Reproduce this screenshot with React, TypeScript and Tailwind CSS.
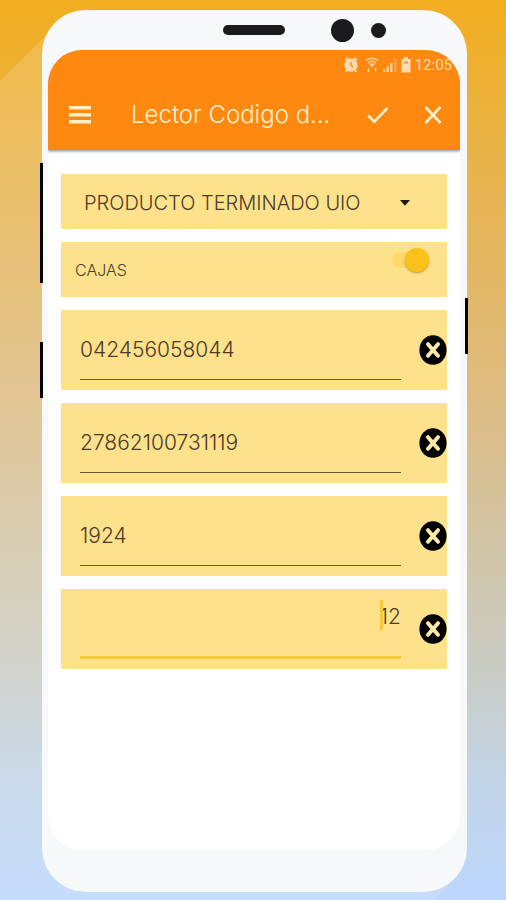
import { useState } from "react";

const INITIAL_FIELDS = [
  { id: "codigo", label: "Código", value: "042456058044" },
  { id: "barras", label: "Código de barras", value: "27862100731119" },
  { id: "lote", label: "Lote", value: "1924" },
  { id: "cantidad", label: "Cantidad", value: "12", active: true },
];

export default function App() {
  const [fields, setFields] = useState(INITIAL_FIELDS);
  const [cajas, setCajas] = useState(true);

  const update = (id: string, value: string) =>
    setFields(fields.map((f) => (f.id === id ? { ...f, value } : f)));

  return (
    <div className="relative flex min-h-screen flex-col bg-[linear-gradient(to_bottom,#f2ae20_0%,#e8b34a_18%,#dcbc85_46%,#d4c29c_56%,#c8cdc8_76%,#c2d4e8_87%,#bcd6fc_100%)] pt-[10px] pr-[39px] pb-2 pl-[42px] font-['Inter','Liberation_Sans',sans-serif]">
      {/* Diagonal light */}
      <div className="absolute inset-0 bg-white/15 [clip-path:polygon(0_9%,9%_4%,92%_96%,86%_100%,0_100%)]" />

      {/* Phone body */}
      <div className="relative flex flex-1 flex-col rounded-[44px] bg-[#f6f8fa] pr-[7px] pb-[42px] pl-[6px]">
        <div className="absolute top-[153px] left-[-2px] h-[120px] w-[3px] bg-black" />
        <div className="absolute top-[332px] left-[-2px] h-14 w-[3px] bg-black" />
        <div className="absolute top-[288px] right-[-1px] h-14 w-[3px] bg-black" />

        <div className="grid h-10 grid-cols-[1fr_auto_1fr] items-center">
          <span />
          <span className="h-[10px] w-[62px] rounded-full bg-[#1b1b1d]" />
          <span className="flex items-center gap-[17px] pl-[46px]">
            <span className="size-[23px] rounded-full bg-[#1b1b1d]" />
            <span className="size-[15px] rounded-full bg-[#1b1b1d]" />
          </span>
        </div>

        <div className="flex flex-1 flex-col overflow-hidden rounded-[34px] bg-white">
          <header className="h-[100px] bg-[#fe8810] text-[#fff0cc] shadow-[0_1px_3px_rgba(0,0,0,0.5)]">
            <StatusBar />
            <div className="flex h-[70px] items-center pr-[18px] pl-[21px]">
              <button type="button" aria-label="Menú" className="mr-10">
                <svg viewBox="0 0 22 18" className="h-[18px] w-[22px]" fill="currentColor">
                  <path d="M0 0h22v3.4H0zM0 7h22v3.4H0zM0 14h22v3.4H0z" />
                </svg>
              </button>
              <h1 className="flex-1 truncate text-2xl font-light">Lector Codigo d...</h1>
              <button type="button" aria-label="Aceptar">
                <svg viewBox="0 0 22 18" className="h-[18px] w-[22px]" fill="none" stroke="currentColor" strokeWidth="2.6">
                  <path d="M1.2 9.5 7.3 15.6 20.5 2" />
                </svg>
              </button>
              <button type="button" aria-label="Cerrar" className="ml-[35px]">
                <svg viewBox="0 0 18 18" className="size-[18px]" fill="none" stroke="currentColor" strokeWidth="2.6">
                  <path d="M1.5 1 16.5 17M16.5 1 1.5 17" />
                </svg>
              </button>
            </div>
          </header>

          <main className="flex flex-col gap-[13px] px-[13px] pt-6 pb-12 text-[#4c3a2c]">
            <div className="relative h-[55px] bg-[#fde18b]">
              <select
                aria-label="Bodega"
                className="size-full appearance-none bg-transparent pt-[2px] pr-16 pl-[23px] text-xl font-light"
              >
                <option>PRODUCTO TERMINADO UIO</option>
              </select>
              <svg viewBox="0 0 12 7" className="pointer-events-none absolute top-[26px] right-9 h-[7px] w-3" fill="#1d1712">
                <path d="M1 0h10L6 5.800z" />
              </svg>
            </div>

            <div className="flex h-[55px] justify-between bg-[#fde18b] pr-[18px] pl-[14px]">
              <label htmlFor="cajas" className="self-center text-base font-light">
                CAJAS
              </label>
              <input
                id="cajas"
                type="checkbox"
                role="switch"
                checked={cajas}
                onChange={(e) => setCajas(e.target.checked)}
                className="relative mt-[6px] h-6 w-[37px] appearance-none before:absolute before:top-1 before:left-0 before:h-4 before:w-8 before:rounded-full before:bg-[#fdd969] after:absolute after:top-0 after:left-0 after:size-6 after:rounded-full after:bg-[#fac218] after:shadow-[0_1px_2px_rgba(120,80,0,0.5)] checked:after:left-[13px]"
              />
            </div>

            {fields.map((f) => (
              <div key={f.id} className="flex h-20 items-center bg-[#fde18b] pl-[19px]">
                <div className="relative min-w-0 flex-1">
                  <input
                    id={f.id}
                    aria-label={f.label}
                    value={f.value}
                    onChange={(e) => update(f.id, e.target.value)}
                    className={
                      f.active
                        ? "h-[60px] w-full border-b-3 border-[#f3c93f] bg-transparent pb-[22px] text-right text-[21px] font-light outline-none"
                        : "h-[60px] w-full border-b border-[#6b5638] bg-transparent text-[21px] font-light outline-none"
                    }
                  />
                  {f.active && <span className="absolute top-px right-[18px] h-[30px] w-[3px] bg-[#f5cb3a]" />}
                </div>
                <button
                  type="button"
                  aria-label={`Borrar ${f.label}`}
                  onClick={() => update(f.id, "")}
                  className="ml-[18px]"
                >
                  <svg viewBox="0 0 28 30" className="h-[30px] w-7">
                    <ellipse cx="14" cy="15" rx="13.6" ry="14.8" fill="#000" />
                    <path d="M9 9.200 19 20.800M19 9.200 9 20.800" stroke="#fde9a8" strokeWidth="4" strokeLinecap="round" />
                  </svg>
                </button>
              </div>
            ))}
          </main>
        </div>
      </div>
    </div>
  );
}

function StatusBar() {
  return (
    <div className="flex h-[30px] items-center justify-end gap-1 pr-2 text-[#ffdcae]">
      {/* Alarm */}
      <svg viewBox="0 0 14 16" className="h-4 w-[14px]">
        <path d="M1 3 4 .8M10 .8l3 2.2M3 13l-1.4 2M11 13l1.4 2" stroke="currentColor" strokeWidth="1.8" />
        <circle cx="7" cy="8.2" r="6.6" fill="currentColor" />
        <path d="M7 4.8v3.7l2.3 1.6" fill="none" stroke="#fe8810" strokeWidth="1.3" />
      </svg>
      {/* Wifi */}
      <svg viewBox="0 0 14 16" className="ml-[3px] h-4 w-[14px]" fill="none" stroke="currentColor" opacity="0.8">
        <path d="M1 3.500C4.500.7 9.500.7 13 3.500M3 5.800c2.500-2 5.500-2 8 0" strokeWidth="1.6" />
        <path d="M3.500 6.500h7L7 10.500z" fill="currentColor" stroke="none" />
        <path d="M3.500 10.500v4M2 13l1.500 1.800L5 13M10.500 15v-4M9 12.500l1.500-1.800 1.500 1.800" strokeWidth="1" />
      </svg>
      {/* Signal */}
      <svg viewBox="0 0 14 16" className="h-4 w-[14px]" fill="currentColor">
        <path d="M0 12.500h2.500V15H0zM3.500 9.500H6V15H3.500zM7 6h2.500v9H7z" opacity="0.8" />
        <path d="M11 1.500h2.500V15H11z" opacity="0.35" />
      </svg>
      {/* Battery */}
      <svg viewBox="0 0 10 16" className="h-4 w-[10px]">
        <path d="M3 0h4v2h2.500v13.500h-9V2H3z" fill="currentColor" />
        <path d="M3 4h4v3H3z" fill="#fe8810" opacity="0.6" />
      </svg>
      <span className="font-['Roboto','Liberation_Sans',sans-serif] text-[15px] leading-4">12:05</span>
    </div>
  );
}
